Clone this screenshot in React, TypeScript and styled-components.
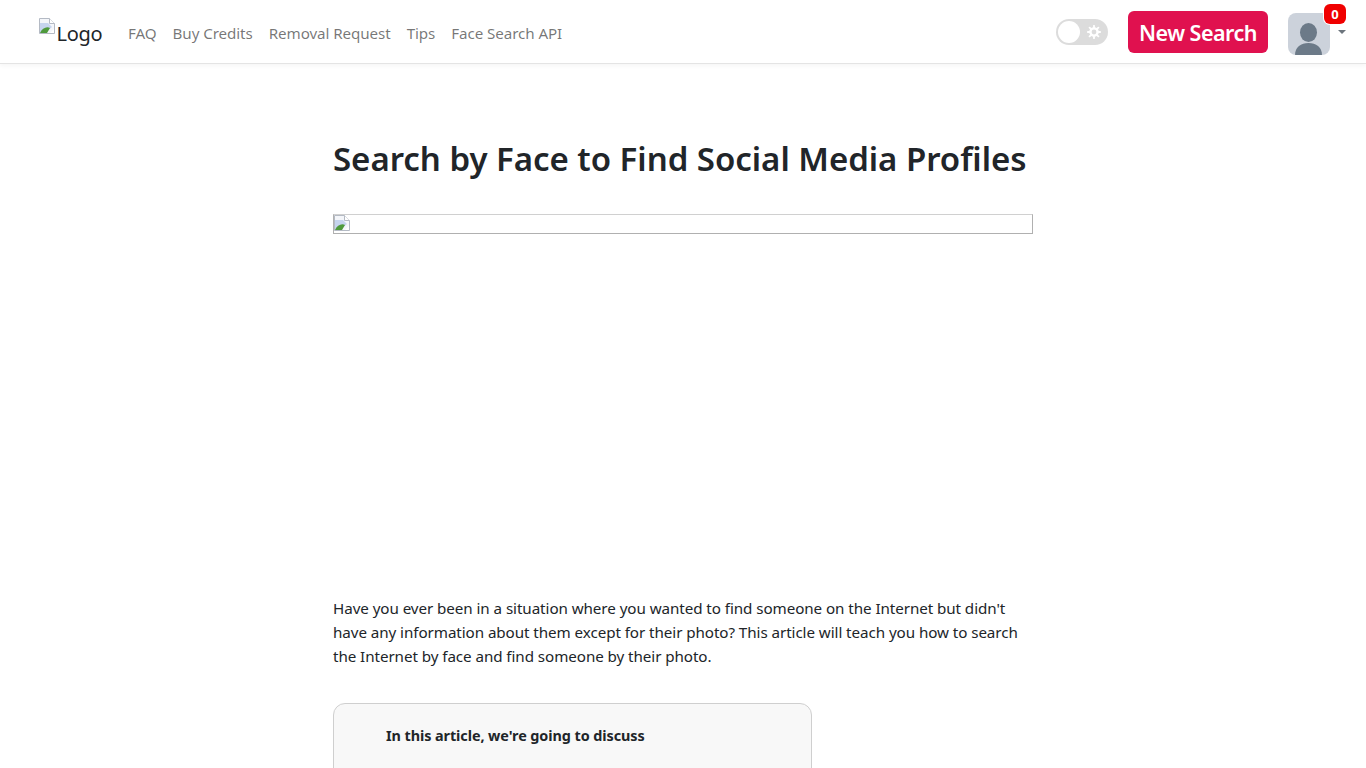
import styled, { createGlobalStyle } from 'styled-components';

const GlobalStyle = createGlobalStyle`
	html, body {
		margin: 0;
		padding: 0;
		background: #fff;
		height: 768px;
		overflow: hidden;
	}
	body {
		font-family: 'Noto Sans', 'Open Sans', sans-serif;
		font-size: 16px;
		color: #212529;
	}
`;

function BrokenImage() {
	return (
		<BrokenSvg width="16" height="16" viewBox="0 0 16 16">
			<path d="M0.5 0.5H10.5L15.5 5.5V15.5H0.5Z" fill="#f4f6fa" stroke="#b4bac4" />
			<path d="M10.5 0.5V5.5H15.5" fill="#fff" stroke="#b4bac4" />
			<path d="M1 5L9 5L13 9L6 15H1Z" fill="#c6d4ee" />
			<path d="M1 15C3 10 8 8 11 10L8 15Z" fill="#4f9a3c" />
			<path d="M11 15L15 11V15Z" fill="#ffffff" />
		</BrokenSvg>
	);
}

function NavAvatar() {
	return (
		<svg width="42" height="42" viewBox="0 0 42 42">
			<ellipse cx="20.5" cy="19.5" rx="8.5" ry="9.5" fill="#6c7a88" />
			<path d="M7 42C7 34 13 30 20.5 30C28 30 34 34 34 42Z" fill="#6c7a88" />
		</svg>
	);
}

function ThemeGear() {
	return (
		<svg width="14" height="14" viewBox="0 0 14 14">
			<circle cx="7" cy="7" r="3.6" fill="none" stroke="#fff" strokeWidth="2.4" />
			<g stroke="#fff" strokeWidth="1.8" strokeLinecap="round">
				<path d="M7 0.8V2.4M7 11.6V13.2M0.8 7H2.4M11.6 7H13.2M2.6 2.6L3.7 3.7M10.3 10.3L11.4 11.4M11.4 2.6L10.3 3.7M3.7 10.3L2.6 11.4" />
			</g>
		</svg>
	);
}

const navLinks = ['FAQ', 'Buy Credits', 'Removal Request', 'Tips', 'Face Search API'];

export default function App() {
	return (
		<>
			<GlobalStyle />
			<Navbar>
				<Brand>
					<BrokenImage />
					<BrandText>Logo</BrandText>
				</Brand>
				<NavList>
					{navLinks.map(link => (
						<NavLink key={link} href="#">
							{link}
						</NavLink>
					))}
				</NavList>
				<NavRight>
					<ThemeToggle>
						<ToggleKnob />
						<GearWrap>
							<ThemeGear />
						</GearWrap>
					</ThemeToggle>
					<SearchButton>New Search</SearchButton>
					<ProfileWrap>
						<Avatar>
							<NavAvatar />
						</Avatar>
						<Badge>0</Badge>
						<Caret />
					</ProfileWrap>
				</NavRight>
			</Navbar>
			<Article>
				<Title>Search by Face to Find Social Media Profiles</Title>
				<HeroFrame>
					<BrokenImage />
				</HeroFrame>
				<Intro>
					Have you ever been in a situation where you wanted to find someone on the
					Internet but didn't have any information about them except for their photo?
					This article will teach you how to search the Internet by face and find
					someone by their photo.
				</Intro>
				<TocCard>
					<TocHeading>In this article, we're going to discuss</TocHeading>
				</TocCard>
			</Article>
		</>
	);
}

const Navbar = styled.nav`
	display: flex;
	align-items: center;
	height: 63px;
	padding: 0 20px 0 39px;
	background: #fff;
	border-bottom: 1px solid #e4e4e4;
	box-shadow: 0 2px 4px rgba(0, 0, 0, 0.04);
`;

const Brand = styled.a`
	display: flex;
	align-items: flex-start;
	width: 89px;
	height: 32px;
	margin-top: 4px;
`;

const BrokenSvg = styled.svg`
	display: block;
	flex: none;
`;

const BrandText = styled.span`
	margin: 2px 0 0 1.5px;
	font-size: 20px;
	line-height: 27px;
	letter-spacing: -0.3px;
	color: #212529;
`;

const NavList = styled.div`
	display: flex;
	gap: 16px;
	margin-top: 2px;
`;

const NavLink = styled.a`
	font-size: 15.2px;
	line-height: 24px;
	letter-spacing: -0.09px;
	color: rgba(0, 0, 0, 0.55);
	text-decoration: none;
`;

const NavRight = styled.div`
	display: flex;
	align-items: center;
	margin-left: auto;
`;

const ThemeToggle = styled.div`
	position: relative;
	width: 52px;
	height: 26px;
	border-radius: 13px;
	background: #dcdcdc;
	margin-right: 20px;
`;

const ToggleKnob = styled.span`
	position: absolute;
	top: 2px;
	left: 2px;
	width: 22px;
	height: 22px;
	border-radius: 50%;
	background: #fff;
`;

const GearWrap = styled.span`
	position: absolute;
	top: 6px;
	right: 7px;
	display: flex;
`;

const SearchButton = styled.button`
	width: 140px;
	height: 42px;
	padding: 0;
	border: none;
	border-radius: 6px;
	background: #e0114f;
	color: #fff;
	font-family: inherit;
	font-size: 21.5px;
	font-weight: 600;
	line-height: 44px;
	letter-spacing: -0.5px;
	margin-right: 20px;
`;

const ProfileWrap = styled.div`
	position: relative;
	width: 58px;
	height: 42px;
	margin-top: 4px;
`;

const Avatar = styled.div`
	width: 42px;
	height: 42px;
	border-radius: 8px;
	background: #ccd2db;
	overflow: hidden;
`;

const Badge = styled.span`
	position: absolute;
	top: -9px;
	left: 36px;
	width: 22px;
	height: 20px;
	border-radius: 6px;
	background: #f00000;
	box-shadow: 0 0 0 1px #fff;
	color: #fff;
	font-size: 13px;
	font-weight: 700;
	line-height: 20px;
	text-align: center;
`;

const Caret = styled.span`
	position: absolute;
	top: 17px;
	left: 50px;
	border-top: 4px solid #6c757d;
	border-left: 4px solid transparent;
	border-right: 4px solid transparent;
`;

const Article = styled.main`
	width: 700px;
	margin-left: 333px;
	padding-top: 72px;
`;

const Title = styled.h1`
	margin: 0 0 32px;
	font-size: 33px;
	font-weight: 600;
	line-height: 46px;
	letter-spacing: -0.03px;
	white-space: nowrap;
	color: #212529;
`;

const HeroFrame = styled.div`
	box-sizing: border-box;
	width: 700px;
	height: 20px;
	border: 1px solid #b0b0b0;
	border-top-color: #d0d0d0;
	margin-bottom: 362px;
`;

const Intro = styled.p`
	margin: 0 0 35px;
	font-size: 15.2px;
	line-height: 24px;
	letter-spacing: -0.07px;
	color: #212529;
`;

const TocCard = styled.section`
	box-sizing: border-box;
	width: 479px;
	height: 120px;
	padding: 21px 52px;
	border: 1px solid #cfcfcf;
	border-radius: 12px;
	background: #f8f8f8;
`;

const TocHeading = styled.div`
	font-size: 14.4px;
	font-weight: 700;
	line-height: 21px;
	letter-spacing: -0.07px;
	color: #212529;
`;
